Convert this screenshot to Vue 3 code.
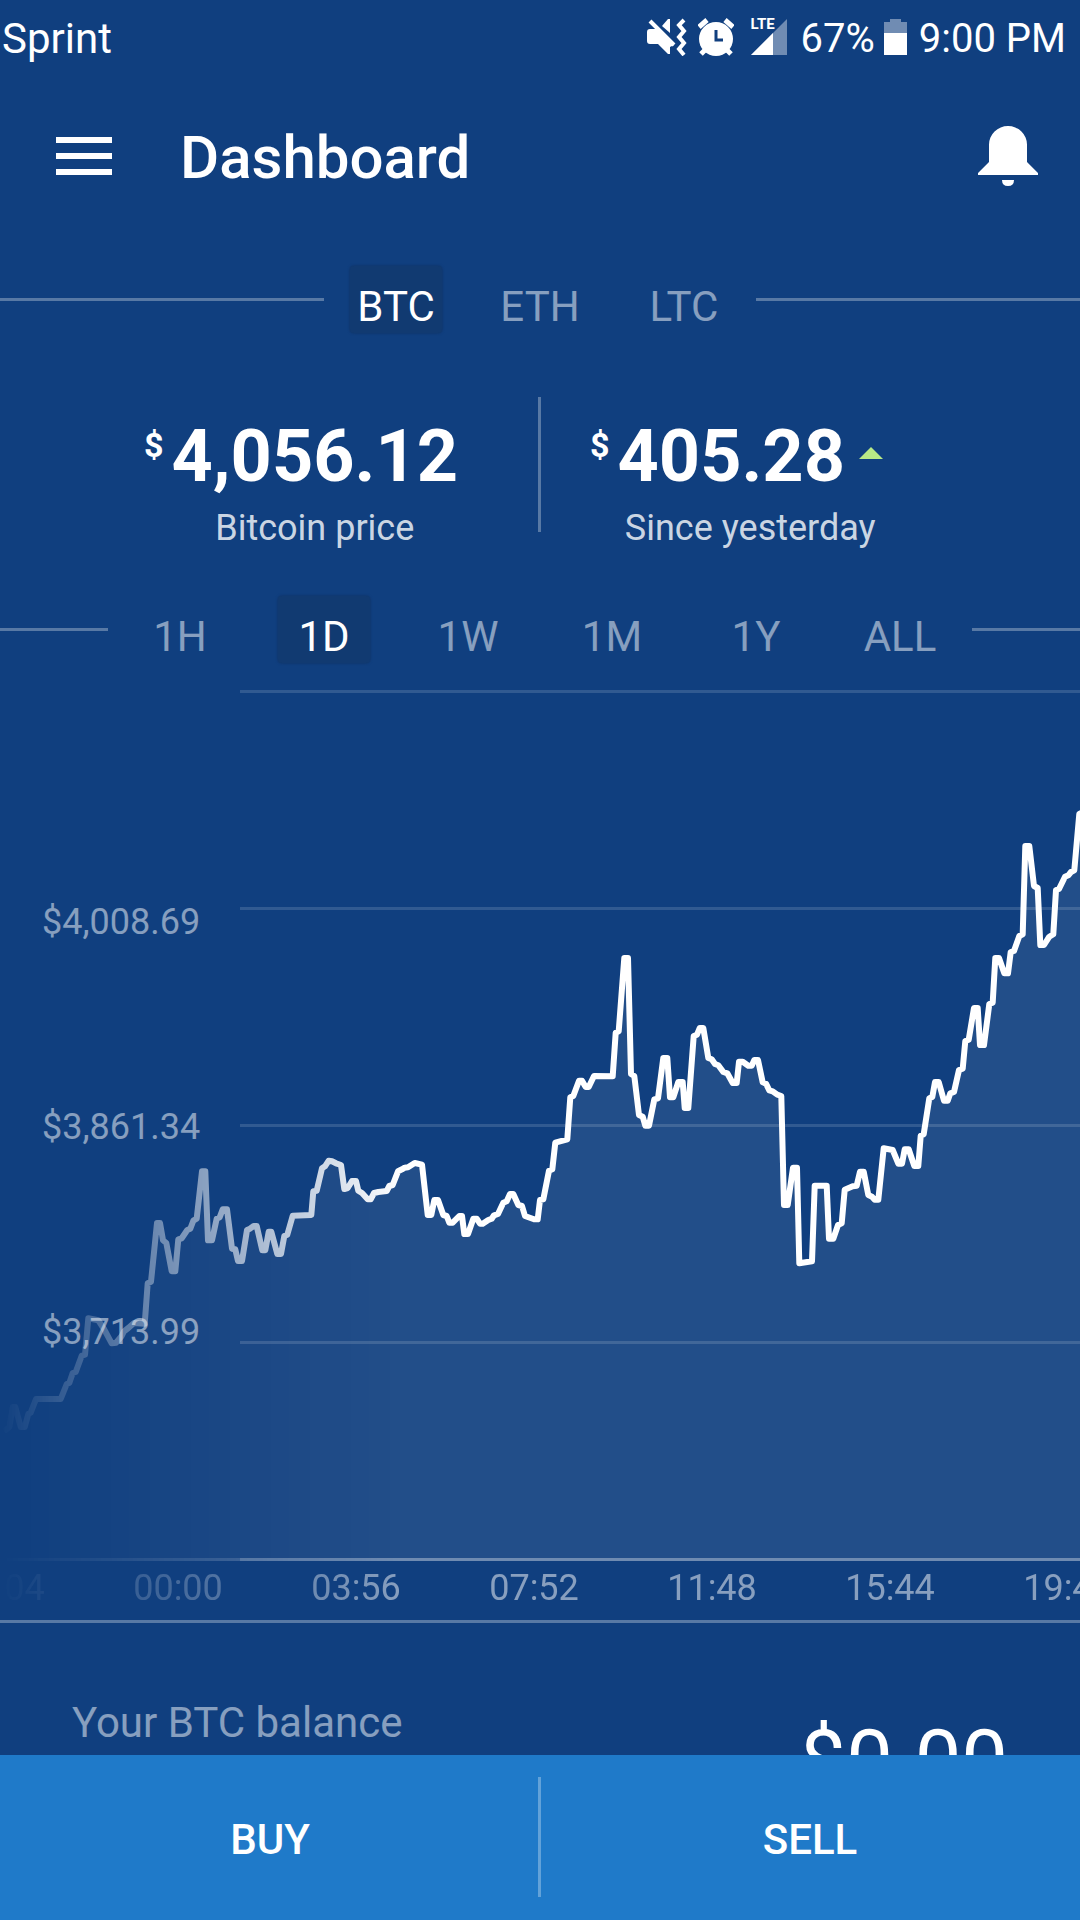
<script setup>
import { ref } from 'vue'

const coins = ['BTC', 'ETH', 'LTC']
const coin = ref('BTC')
const ranges = ['1H', '1D', '1W', '1M', '1Y', 'ALL']
const range = ref('1D')
const prices = ['$4,008.69', '$3,861.34', '$3,713.99']
const times = ['20:04', '00:00', '03:56', '07:52', '11:48', '15:44', '19:44']
const gridLines = [0, 217, 434, 651, 868]

// Samples come in blocks: three ticks per chart unit, counted from the block's origin.
const blocks = [
  {
    origin: [0, 410],
    samples: [
      [12, 994], [28, 981], [38, 921], [46, 921], [62, 981], [74, 981], [85, 942], [92, 938], [108, 897], [182, 897],
      [200, 852], [208, 849], [218, 819], [227, 816], [245, 767], [255, 764], [265, 655], [295, 661], [312, 687],
      [335, 730], [348, 728], [365, 708], [372, 694], [385, 684], [402, 669], [434, 671], [443, 550], [453, 545],
      [471, 369], [480, 369], [489, 421], [499, 429], [515, 514], [526, 514], [535, 418], [545, 415], [562, 390],
      [571, 386], [580, 362], [590, 356], [606, 214], [616, 214], [624, 421], [636, 421], [650, 356], [659, 352],
      [668, 328], [681, 328], [696, 446], [706, 448], [714, 483], [726, 483], [741, 390], [750, 386], [761, 378],
      [770, 378], [787, 451], [796, 451], [806, 395], [814, 395], [832, 462], [843, 462], [853, 408], [862, 404],
      [878, 347], [934, 345], [940, 274], [950, 272], [966, 205], [975, 199], [986, 182], [996, 184], [1008, 190],
      [1023, 195], [1033, 267], [1043, 264], [1056, 243], [1068, 243], [1075, 272], [1086, 279], [1103, 298],
      [1112, 298], [1122, 279], [1135, 276], [1160, 273], [1168, 258], [1178, 255]
    ]
  },
  {
    origin: [380, 210],
    samples: [
      [54, 814], [66, 808], [74, 803], [84, 802], [104, 789], [126, 794], [143, 945], [154, 945], [163, 900],
      [174, 900], [190, 945], [200, 948], [208, 968], [218, 968], [238, 948], [246, 948], [253, 1002], [264, 1002],
      [280, 956], [290, 956], [300, 971], [308, 971], [325, 960], [335, 956], [342, 946], [354, 942], [370, 908],
      [380, 904], [390, 882], [400, 882], [415, 915], [426, 918], [435, 948], [462, 958], [473, 958], [480, 900],
      [490, 898], [507, 812], [517, 808], [526, 728], [562, 718], [571, 592], [580, 588], [597, 542], [606, 542],
      [617, 561], [626, 561], [642, 528], [698, 529], [707, 398], [716, 394], [733, 174], [744, 174], [753, 522],
      [763, 528], [777, 645], [788, 650], [796, 677], [807, 677], [823, 598], [834, 595], [850, 474], [862, 474],
      [870, 592], [880, 592], [895, 546], [908, 546], [914, 624], [925, 624], [941, 408], [951, 404], [959, 384],
      [970, 384], [985, 474], [995, 478], [1005, 492], [1015, 496]
    ]
  },
  {
    origin: [720, 90],
    samples: [
      [10, 876], [22, 880], [38, 909], [50, 909], [57, 845], [68, 845], [85, 857], [95, 857], [103, 840], [114, 840],
      [128, 907], [138, 911], [148, 931], [158, 934], [172, 944], [184, 948], [192, 1275], [203, 1275], [219, 1163],
      [231, 1163], [238, 1450], [276, 1444], [284, 1217], [320, 1217], [327, 1376], [340, 1376], [354, 1335],
      [365, 1330], [374, 1229], [398, 1219], [410, 1217], [420, 1175], [431, 1175], [445, 1245], [456, 1250],
      [464, 1259], [475, 1259], [491, 1105], [518, 1110], [535, 1151], [546, 1151], [554, 1108], [566, 1108],
      [583, 1158], [595, 1158], [602, 1067], [611, 1063], [628, 955], [637, 951], [645, 906], [656, 906], [672, 962],
      [683, 962], [691, 940], [702, 936], [717, 870], [728, 866], [736, 783], [746, 779], [762, 684], [773, 684],
      [780, 795], [792, 795], [808, 672], [818, 668], [826, 534], [837, 534], [853, 580], [864, 580], [872, 516],
      [882, 513], [898, 468], [908, 463], [916, 198], [928, 198], [942, 318], [953, 324], [961, 495], [972, 495],
      [988, 470], [1000, 463], [1008, 330], [1017, 327], [1035, 290], [1045, 286], [1053, 276], [1063, 271],
      [1078, 102], [1090, 96]
    ]
  }
]

const line = blocks
  .flatMap(({ origin, samples }) =>
    samples.map(([x, y]) => `${(origin[0] + x / 3).toFixed(1)},${(origin[1] + y / 3).toFixed(1)}`)
  )
  .join(' ')
const area = `${line} 1084,868 0,868`
</script>

<template>
  <div class="page">
    <div class="status">
      <span class="carrier">Sprint</span>
      <svg class="mute" width="40" height="38" viewBox="0 0 40 38" fill="#fff">
        <path d="M0 14q0-3 3-3h8l16 16-4 2v7h-2L11 26H3q-3 0-3-3z" />
        <path d="M15 8l6-7h2v14z" />
        <path d="M3 3l24 24" stroke="#fff" stroke-width="4" />
        <path d="M37 2l-5 5 5 6-5 6 5 6-5 6 5 6" fill="none" stroke="#fff" stroke-width="4" />
      </svg>
      <svg class="alarm" width="36" height="38" viewBox="0 0 36 38">
        <circle cx="18" cy="21" r="17" fill="#fff" />
        <path d="M1 9l8-7M35 9l-8-7M8 31l-5 5M28 31l5 5" stroke="#fff" stroke-width="5" />
        <path d="M18 12v10h7" fill="none" stroke="#103f7f" stroke-width="3" />
      </svg>
      <span class="signal">
        <svg width="36" height="36" viewBox="0 0 36 36">
          <path d="M0 36L36 0v36z" fill="#708cb3" />
          <path d="M0 36L22 14v22z" fill="#fff" />
        </svg>
        <span class="lte">LTE</span>
      </span>
      <span class="reading">67%</span>
      <svg class="battery" width="23" height="36" viewBox="0 0 23 36">
        <path d="M6 0h11v3h6v11H0V3h6z" fill="#708cb3" />
        <path d="M0 14h23v22H0z" fill="#fff" />
      </svg>
      <span class="reading">9:00 PM</span>
    </div>

    <header class="appbar">
      <button class="icon" aria-label="Menu">
        <svg width="56" height="38" viewBox="0 0 56 38" fill="#fff">
          <path d="M0 0h56v6H0zM0 16h56v6H0zM0 32h56v6H0z" />
        </svg>
      </button>
      <h1>Dashboard</h1>
      <button class="icon" aria-label="Notifications">
        <svg width="60" height="60" viewBox="0 0 60 60" fill="#fff">
          <path d="M11 18.500a19 18.500 0 0 1 38 0V36l11 11v2H0v-2l11-11z" />
          <path d="M24 54h12q0 6-6 6t-6-6z" />
        </svg>
      </button>
    </header>

    <main>
      <nav class="tabs" aria-label="Currency">
        <button v-for="c in coins" :key="c" :class="{ active: c === coin }" @click="coin = c">
          <span>{{ c }}</span>
        </button>
      </nav>

      <section class="stats">
        <div class="stat price">
          <span class="currency">$</span>
          <div class="figure">
            <strong>4,056.12</strong>
            <span class="label">Bitcoin price</span>
          </div>
        </div>
        <div class="stat change">
          <span class="currency">$</span>
          <div class="figure">
            <strong>405.28
              <svg class="up" width="24" height="12" viewBox="0 0 24 12"><path d="M12 0l12 12H0z" fill="#b8e986" /></svg>
            </strong>
            <span class="label">Since yesterday</span>
          </div>
        </div>
      </section>

      <nav class="tabs" aria-label="Period">
        <button v-for="r in ranges" :key="r" :class="{ active: r === range }" @click="range = r">
          <span>{{ r }}</span>
        </button>
      </nav>

      <section class="chart">
        <div class="fade">
          <svg class="plot" viewBox="0 0 1080 871" preserveAspectRatio="none">
            <polygon :points="area" fill="#fff" fill-opacity="0.08" />
            <path d="M0 869.500H1080" stroke="#fff" stroke-opacity="0.3" stroke-width="3" />
            <polyline :points="line" fill="none" stroke="#fff" stroke-width="6" stroke-linejoin="round" />
          </svg>
          <ul class="times">
            <li v-for="t in times" :key="t">{{ t }}</li>
          </ul>
        </div>
        <svg class="grid" viewBox="0 0 1080 871" preserveAspectRatio="none">
          <rect v-for="y in gridLines" :key="y" x="240" :y="y" width="840" height="3" fill="#fff" fill-opacity="0.14" />
        </svg>
        <ul class="prices">
          <li v-for="p in prices" :key="p">{{ p }}</li>
        </ul>
      </section>

      <section class="balance">
        <span>Your BTC balance</span>
        <span class="amount">$0.00</span>
      </section>
    </main>

    <footer class="actions">
      <button>BUY</button>
      <button>SELL</button>
    </footer>
  </div>
</template>

<style>
body {
  background: #103f7f;
}
</style>

<style scoped>
.page {
  height: 100vh;
  display: flex;
  flex-direction: column;
  overflow: hidden;
  background: #103f7f;
  color: #fff;
  font-family: Roboto, "Liberation Sans", sans-serif;
}
button {
  border: 0;
  padding: 0;
  background: none;
  color: inherit;
  font: inherit;
}
svg {
  display: block;
}
ul {
  list-style: none;
  margin: 0;
  padding: 0;
}
.status {
  flex: none;
  height: 72px;
  padding: 2px 14px 0 2px;
  box-sizing: border-box;
  display: flex;
  align-items: center;
  font-size: 40px;
  line-height: 48px;
}
.carrier,
.reading {
  padding-top: 4px;
}
.carrier {
  margin-right: auto;
  font-size: 42px;
}
.alarm {
  margin: 0 17px 0 11px;
}
.signal {
  position: relative;
  margin-right: 14px;
}
.lte {
  position: absolute;
  left: 0;
  top: -2px;
  font-size: 15px;
  line-height: 14px;
  font-weight: 700;
}
.battery {
  margin: 0 12px 0 9px;
}
.appbar {
  flex: none;
  height: 168px;
  padding: 0 42px 0 56px;
  display: flex;
  align-items: center;
}
h1 {
  margin: 0 auto 0 68px;
  padding-top: 4px;
  font-size: 60px;
  line-height: 72px;
  font-weight: 500;
}
main {
  flex: 1;
  min-height: 0;
  overflow: hidden;
}
.tabs {
  height: 119px;
  margin-bottom: 1px;
  display: flex;
  align-items: center;
}
.tabs::before,
.tabs::after {
  content: "";
  flex: 1;
  height: 3px;
  background: rgba(255, 255, 255, 0.3);
}
.tabs button {
  width: 144px;
  display: flex;
  justify-content: center;
  font-size: 42px;
  line-height: 48px;
  color: rgba(255, 255, 255, 0.5);
}
.tabs button span {
  box-sizing: border-box;
  width: 92px;
  height: 67px;
  padding-top: 17px;
  border-radius: 4px;
}
.tabs .active {
  color: #fff;
}
.tabs .active span {
  background: #113a71;
  box-shadow: 0 0 2px 1px #103870;
}
.stats {
  position: relative;
  height: 210px;
  display: flex;
}
.stats::after,
.actions::after {
  content: "";
  position: absolute;
  left: 50%;
  margin-left: -2px;
  width: 3px;
  background: rgba(255, 255, 255, 0.3);
}
.stats::after {
  top: 37px;
  height: 135px;
}
.stat {
  box-sizing: border-box;
  width: 50%;
  display: flex;
  padding-top: 61px;
}
.price {
  justify-content: flex-end;
  padding-right: 82px;
}
.change {
  padding-left: 50px;
}
.currency {
  margin-right: 8px;
  font-size: 34px;
  line-height: 48px;
  font-weight: 700;
}
.figure {
  display: flex;
  flex-direction: column;
  align-items: center;
  gap: 11px;
}
strong {
  display: flex;
  align-items: center;
  gap: 14px;
  font-size: 72px;
  line-height: 72px;
  font-weight: 700;
}
.up {
  margin-bottom: 8px;
}
.label {
  font-size: 36px;
  line-height: 48px;
  color: rgba(255, 255, 255, 0.8);
}
.chart {
  position: relative;
  height: 930px;
  border-bottom: 3px solid rgba(255, 255, 255, 0.3);
  overflow: hidden;
  font-size: 36px;
  line-height: 48px;
  color: rgba(255, 255, 255, 0.5);
}
.fade {
  mask-image: linear-gradient(to right, transparent 0, #000 400px);
}
.plot,
.grid {
  width: 100%;
  height: 871px;
}
.grid {
  position: absolute;
  left: 0;
  top: 0;
}
.times {
  display: flex;
  padding-top: 3px;
}
.times li {
  flex: 0 0 178px;
  text-align: center;
}
.times li:first-child {
  margin-left: -89px;
}
.prices {
  position: absolute;
  left: 42px;
  top: 208px;
}
.prices li {
  height: 205px;
}
.balance {
  display: flex;
  justify-content: space-between;
  padding: 76px 72px 0;
  font-size: 42px;
  line-height: 48px;
  color: rgba(255, 255, 255, 0.5);
}
.amount {
  margin-top: 14px;
  font-size: 83px;
  line-height: 96px;
  color: #fff;
}
.actions {
  position: relative;
  flex: none;
  height: 165px;
  display: flex;
  background: #1f7ac9;
}
.actions::after {
  top: 22px;
  height: 120px;
}
.actions button {
  flex: 1;
  padding-top: 4px;
  font-size: 42px;
  font-weight: 500;
}
</style>
